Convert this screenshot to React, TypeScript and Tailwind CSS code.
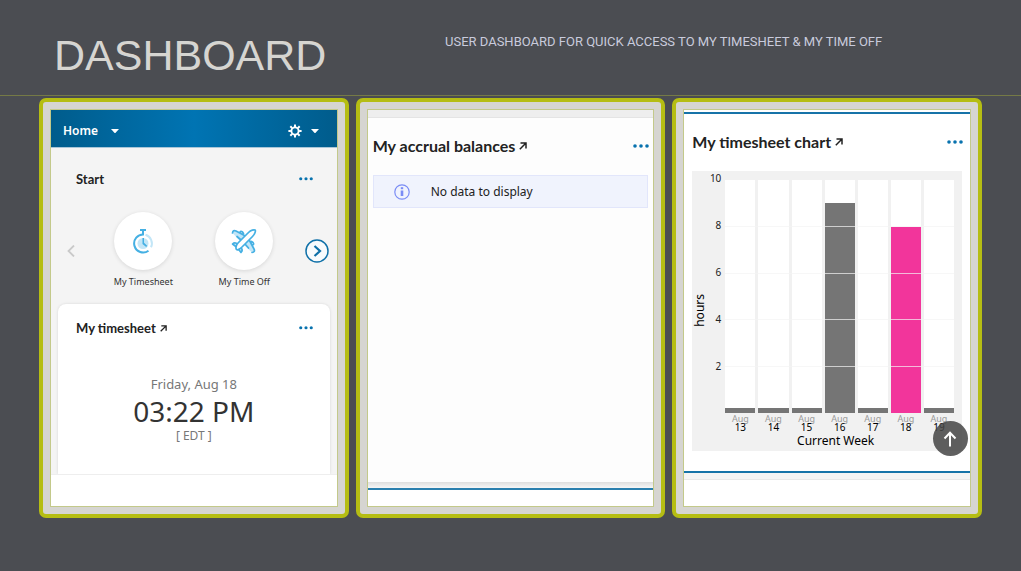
import type { ReactNode } from "react";

const DAYS = [
  { day: 13, hours: 0.2, color: "#757575" },
  { day: 14, hours: 0.2, color: "#757575" },
  { day: 15, hours: 0.2, color: "#757575" },
  { day: 16, hours: 9, color: "#757575" },
  { day: 17, hours: 0.2, color: "#757575" },
  { day: 18, hours: 8, color: "#f2359b" },
  { day: 19, hours: 0.2, color: "#757575" },
];
const TICKS = [10, 8, 6, 4, 2];

function Frame({ children }: { children: ReactNode }) {
  return (
    <section className="flex min-w-0 rounded-[7px] border-4 border-[#b5bd13] bg-[#d6d5d1] p-[7px]">
      <div className="flex min-w-0 flex-1 flex-col border border-[#c3c98a] bg-white">{children}</div>
    </section>
  );
}

function Dots({ label, large = false }: { label: string; large?: boolean }) {
  return (
    <button aria-label={label} className="flex h-4 items-center">
      <svg viewBox="0 0 16 4" className={large ? "w-4" : "w-[14px]"} fill="#0872ae">
        <circle cx="2" cy="2" r="1.8" />
        <circle cx="8" cy="2" r="1.8" />
        <circle cx="14" cy="2" r="1.8" />
      </svg>
    </button>
  );
}

function Title({ children, large = false }: { children: string; large?: boolean }) {
  return (
    <h2
      className={
        large
          ? "font-['Lato',sans-serif] text-base leading-5 font-bold text-[#222]"
          : "font-['Lato',sans-serif] text-[13px] leading-5 font-bold text-[#222]"
      }
    >
      <a href="#" className="flex items-center gap-1">
        {children}
        <svg viewBox="0 0 8 8" className={large ? "w-2" : "w-[7px]"} fill="none" stroke="currentColor" strokeWidth="1.5">
          <path d="M1.5 1h5.5v5.5M7 1L.8 7.2" />
        </svg>
      </a>
    </h2>
  );
}

function Caret() {
  return (
    <svg viewBox="0 0 8 4" className="w-2" fill="#fff">
      <path d="M0 0h8L4.600 3.700Q4 4.200 3.400 3.700z" />
    </svg>
  );
}

function Gear() {
  return (
    <svg viewBox="0 0 14 14" className="w-[14px]" fill="none" stroke="#fff">
      <circle cx="7" cy="7" r="3.600" strokeWidth="1.900" />
      <g strokeWidth="2">
        <path d="M7 .4v2.500M7 11.100v2.500M.4 7h2.500M11.100 7h2.500M2.330 2.330l1.800 1.800M9.870 9.870l1.800 1.800M11.670 2.330l-1.800 1.800M4.130 9.870l-1.800 1.800" />
      </g>
    </svg>
  );
}

function Stopwatch() {
  return (
    <svg viewBox="0 0 24 26" className="w-[24px]" fill="none">
      <circle cx="12" cy="15.500" r="5.500" fill="#c3e6f7" />
      <path d="M14.500 6.800a9 9 0 0 1 5.500 12.500" stroke="#c3e6f7" strokeWidth="2" />
      <path d="M13 6.500A9 9 0 1 0 17.500 22.700" stroke="#45b0e3" strokeWidth="2" />
      <path d="M9 2h6M12 2v4.500" stroke="#45b0e3" strokeWidth="2" />
      <path d="M11.500 10h1.500v4.800l3.200 3-1 1.200-3.700-3z" fill="#45b0e3" />
    </svg>
  );
}

function Plane() {
  return (
    <svg viewBox="0 0 26 26" className="w-[26px]" strokeLinejoin="round" strokeLinecap="round" strokeWidth="1.700">
      <path d="M15 8.500L4 3Q1.500 2.500 1.500 5L9 13zM17.500 11L23 22q.5 2.500-2 2.500L13 17z" fill="#c3e6f7" stroke="none" />
      <path d="M13.500 7.500L5 3Q2 1.500 1.500 5M10 12L6 8.500M18.500 12.500L23 21q1.500 3-2 3.500M14 16l3.500 4M9 4.500Q9.500 2.500 11.500 4l1 1.500M21.500 17q2-.5.5-2.500L20.500 13.500" fill="none" stroke="#45b0e3" />
      <path d="M7 16.500C5 14.500 3 14.500 1.500 16L5.500 19zM9.500 19c2 2 2 4 .5 5.500L7 20.500z" fill="#c3e6f7" stroke="#45b0e3" />
      <path d="M7 15L17.500 4.500C20 2 23 1.500 24 2s0 4-2.500 6.500L11 19c-2 2-4.500 3.500-5.500 2.500S5 17 7 15z" fill="#fff" stroke="#45b0e3" />
    </svg>
  );
}

function Shortcut({ label, children }: { label: string; children: ReactNode }) {
  return (
    <a href="#" className="flex w-[66px] flex-col items-center gap-1">
      <span className="flex size-[58px] items-center justify-center rounded-full bg-white shadow-[0_1px_4px_rgba(0,0,0,0.12)]">
        {children}
      </span>
      <span className="text-[9px] leading-4 whitespace-nowrap text-[#333]">{label}</span>
    </a>
  );
}

function HomePanel() {
  return (
    <Frame>
      <div className="flex h-[38px] items-center border-b border-[#a9c6d8] bg-linear-to-r from-[#005c8c] via-[#0074b3] to-[#005c8c] pt-1 pr-[18px] pl-3">
        <button className="flex items-center gap-[13px] text-xs font-semibold text-white">
          Home
          <Caret />
        </button>
        <button aria-label="Settings" className="ml-auto flex items-center gap-[9px]">
          <Gear />
          <Caret />
        </button>
      </div>
      <div className="flex flex-1 flex-col bg-[#f4f4f4]">
        <div className="flex items-center justify-between pt-[21px] pr-6 pl-[25px]">
          <h2 className="font-['Lato',sans-serif] text-[13px] leading-5 font-bold text-[#222]">Start</h2>
          <Dots label="Start options" />
        </div>
        <div className="mt-[23px] flex items-center pr-2 pl-3">
          <button aria-label="Previous" className="w-5 pl-1">
            <svg viewBox="0 0 8 12" className="w-2" fill="none" stroke="#c9c9c9" strokeWidth="1.800">
              <path d="M7 .5L1.500 6 7 11.500" />
            </svg>
          </button>
          <div className="flex flex-1 justify-center gap-[35px]">
            <Shortcut label="My Timesheet">
              <Stopwatch />
            </Shortcut>
            <Shortcut label="My Time Off">
              <Plane />
            </Shortcut>
          </div>
          <button aria-label="Next" className="size-6">
            <svg viewBox="0 0 24 24" className="w-6" fill="none" stroke="#0f70a8">
              <circle cx="12" cy="12" r="11" fill="#f8fbfd" strokeWidth="1.500" />
              <path d="M9.500 7l5.500 5-5.500 5" strokeWidth="2.200" />
            </svg>
          </button>
        </div>
        <div className="mx-[7px] mt-[14px] flex-1 rounded-t-lg bg-white shadow-[0_0_3px_rgba(0,0,0,0.12)]">
          <div className="flex items-center justify-between pt-[14px] pr-[17px] pl-[18px]">
            <Title>My timesheet</Title>
            <Dots label="My timesheet options" />
          </div>
          <div className="mt-9 flex flex-col items-center pb-7">
            <p className="text-[13px] leading-5 text-[#777]">Friday, Aug 18</p>
            <p className="text-[28px] leading-[34px] text-[#333]">03:22 PM</p>
            <p className="text-xs leading-4 text-[#777]">[ EDT ]</p>
          </div>
        </div>
      </div>
      <div className="z-10 h-8 border-t border-[#eee] bg-white" />
    </Frame>
  );
}

function BalancesPanel() {
  return (
    <Frame>
      <div className="h-[8px] border-b border-[#e4e4e4] bg-[#eee]" />
      <div className="flex-1 bg-[#fdfdfd]">
        <div className="flex items-center justify-between pt-[18px] pr-1 pl-[5px]">
          <Title large>My accrual balances</Title>
          <Dots label="My accrual balances options" large />
        </div>
        <div className="mx-[5px] mt-[19px] flex h-[33px] items-center gap-[21px] border border-[#e2e6fb] bg-[#f0f3fd] pl-5">
          <svg viewBox="0 0 16 16" className="w-4" fill="none" stroke="#7a8cf5">
            <circle cx="8" cy="8" r="7.200" strokeWidth="1.200" />
            <path d="M8 6.500v5.500" strokeWidth="2.600" />
            <path d="M8 3.200v2" strokeWidth="2.400" />
          </svg>
          <p className="text-xs text-[#222]">No data to display</p>
        </div>
      </div>
      <div className="h-[6px] bg-linear-to-b from-[#dedede] to-[#f6f6f6]" />
      <div className="h-[18px] border-t-2 border-[#2a7fae] bg-white" />
    </Frame>
  );
}

function WeekChart() {
  return (
    <div className="mx-2 mt-[19px] flex bg-[#f1f1f1] pt-px pr-2 pb-[2px]">
      <div className="flex w-4 items-center justify-center">
        <span className="rotate-180 text-xs leading-4 text-black [writing-mode:vertical-rl]">hours</span>
      </div>
      <div className="flex w-[13px] flex-col items-end">
        {TICKS.map((tick) => (
          <span key={tick} className="h-[47px] text-[10px] leading-3 text-[#222]">
            {tick}
          </span>
        ))}
      </div>
      <div className="min-w-0 flex-1 pt-2 pl-1">
        <div className="relative flex h-[233px] gap-[3px]">
          {DAYS.map((d) => (
            <div key={d.day} className="flex flex-1 items-end bg-white">
              <div className="w-full" style={{ height: `${d.hours * 10}%`, backgroundColor: d.color }} />
            </div>
          ))}
          <div className="absolute inset-0 flex flex-col">
            {TICKS.map((tick) => (
              <div key={tick} className="flex-1 border-b border-[#f4f4f4]/70 last:border-0" />
            ))}
          </div>
        </div>
        <div className="flex gap-[3px] pt-[2px]">
          {DAYS.map((d) => (
            <div key={d.day} className="flex flex-1 flex-col items-center">
              <span className="text-[9px] leading-2 text-[#999]">Aug</span>
              <span className="text-[10px] leading-[9px] text-black">{d.day}</span>
            </div>
          ))}
        </div>
        <p className="pt-px pr-2 text-center text-xs leading-4 text-black">Current Week</p>
      </div>
    </div>
  );
}

function ChartPanel() {
  return (
    <Frame>
      <div className="relative mt-[2px] flex-1 border-y-2 border-[#1673a8] bg-white">
        <div className="flex items-center justify-between pt-[18px] pr-[7px] pl-2">
          <Title large>My timesheet chart</Title>
          <Dots label="My timesheet chart options" large />
        </div>
        <WeekChart />
        <button
          aria-label="Back to top"
          className="absolute right-[2px] bottom-[15px] flex size-[35px] items-center justify-center rounded-full bg-[#444]/85"
        >
          <svg viewBox="0 0 14 16" className="w-[14px]" fill="none" stroke="#fff" strokeWidth="2">
            <path d="M7 15.500V2M1.500 7.500L7 1.800l5.500 5.700" />
          </svg>
        </button>
      </div>
      <div className="h-[7px] border-b border-[#e8e8e8] bg-[#f4f4f4]" />
      <div className="h-[26px]" />
    </Frame>
  );
}

export default function App() {
  return (
    <div className="min-h-screen bg-[#4b4d52]">
      <header className="grid h-24 grid-cols-[391px_1fr] items-start border-b border-[#757a46] pl-[54px]">
        <h1 className="pt-8 font-['Liberation_Sans',sans-serif] text-[43px] leading-[46px] text-[#d6d5d1]">DASHBOARD</h1>
        <p className="pt-8 font-['Roboto',sans-serif] text-[13px] leading-5 text-[#c9cbdc]">
          USER DASHBOARD FOR QUICK ACCESS TO MY TIMESHEET &amp; MY TIME OFF
        </p>
      </header>
      <main className="grid min-h-[422px] grid-cols-3 gap-[7px] px-[39px] pt-[2px] font-['Noto_Sans',sans-serif]">
        <HomePanel />
        <BalancesPanel />
        <ChartPanel />
      </main>
    </div>
  );
}
